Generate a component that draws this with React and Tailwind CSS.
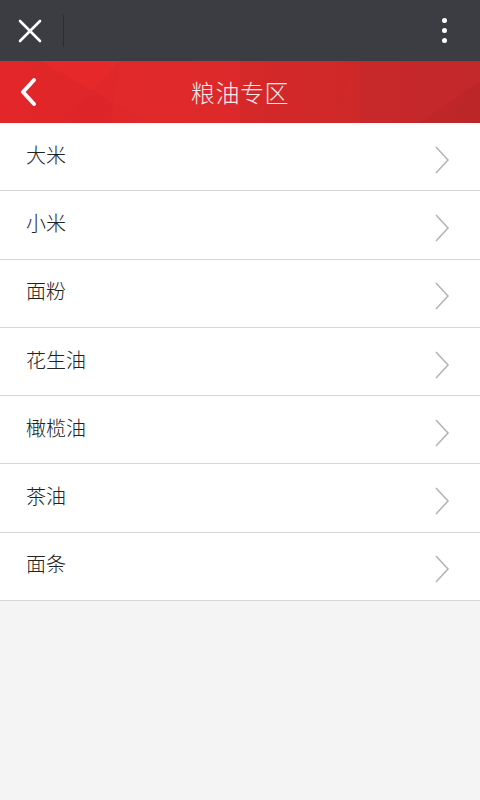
import React from 'react';

const items = ['大米', '小米', '面粉', '花生油', '橄榄油', '茶油', '面条'];

const Chevron = () => (
  <svg width="16" height="28" viewBox="0 0 16 28" fill="none">
    <path d="M2 1 L14 14 L2 27" stroke="#b5b5b5" strokeWidth="1.6" />
  </svg>
);

export default function App() {
  return (
    <div
      className="h-screen flex flex-col bg-[#f4f4f4] overflow-hidden"
      style={{ fontFamily: '"Noto Sans CJK SC", "Noto Sans", sans-serif' }}
    >
      {/* 顶部栏 */}
      <div className="h-[61px] bg-[#3b3d43] flex items-center shrink-0">
        <div className="w-[63px] h-full flex items-center justify-center pr-1">
          <svg width="24" height="24" viewBox="0 0 24 24">
            <path d="M2 2 L22 22 M22 2 L2 22" stroke="#fff" strokeWidth="2.6" strokeLinecap="round" />
          </svg>
        </div>
        <div className="w-px h-[32px] bg-[#2c2d32]" />
        <div className="flex-1" />
        <div className="w-[36px] h-full flex flex-col items-center justify-center gap-[5px] mr-[18px]">
          <span className="w-[5px] h-[5px] rounded-full bg-white" />
          <span className="w-[5px] h-[5px] rounded-full bg-white" />
          <span className="w-[5px] h-[5px] rounded-full bg-white" />
        </div>
      </div>

      {/* 红色标题栏 */}
      <div className="h-[62px] relative shrink-0 bg-gradient-to-r from-[#e6262a] via-[#d9292b] to-[#c4292a] flex items-center justify-center">
        <svg className="absolute inset-0 w-full h-full" viewBox="0 0 480 62" preserveAspectRatio="none">
          <polygon points="0,0 120,0 60,62 0,62" fill="#ea2a2d" opacity="0.6" />
          <polygon points="0,0 40,0 150,62 0,62" fill="#d62327" opacity="0.35" />
          <polygon points="120,0 240,0 240,62 110,62" fill="#e12a2c" opacity="0.5" />
          <polygon points="240,0 360,0 330,62 240,62" fill="#d02729" opacity="0.45" />
          <polygon points="360,0 480,0 480,62 360,62" fill="#c1272a" opacity="0.5" />
          <polygon points="420,62 480,20 480,62" fill="#b82326" opacity="0.5" />
        </svg>
        <button className="absolute left-[18px] top-[16px]">
          <svg width="22" height="30" viewBox="0 0 22 30">
            <path d="M16 3 L5 15 L16 27" stroke="#fff" strokeWidth="4" fill="none" strokeLinecap="round" strokeLinejoin="round" />
          </svg>
        </button>
        <h1 className="relative text-[24px] text-[#fbeaea] font-light tracking-wide">粮油专区</h1>
      </div>

      {/* 列表 */}
      <ul className="bg-white">
        {items.map((name) => (
          <li
            key={name}
            className="h-[68.3px] border-b border-[#d6d6d6] flex items-center justify-between pl-[26px] pr-[30px]"
          >
            <span className="text-[20px] text-[#222] font-light pb-1">{name}</span>
            <span className="pt-[6px]">
              <Chevron />
            </span>
          </li>
        ))}
      </ul>
    </div>
  );
}
